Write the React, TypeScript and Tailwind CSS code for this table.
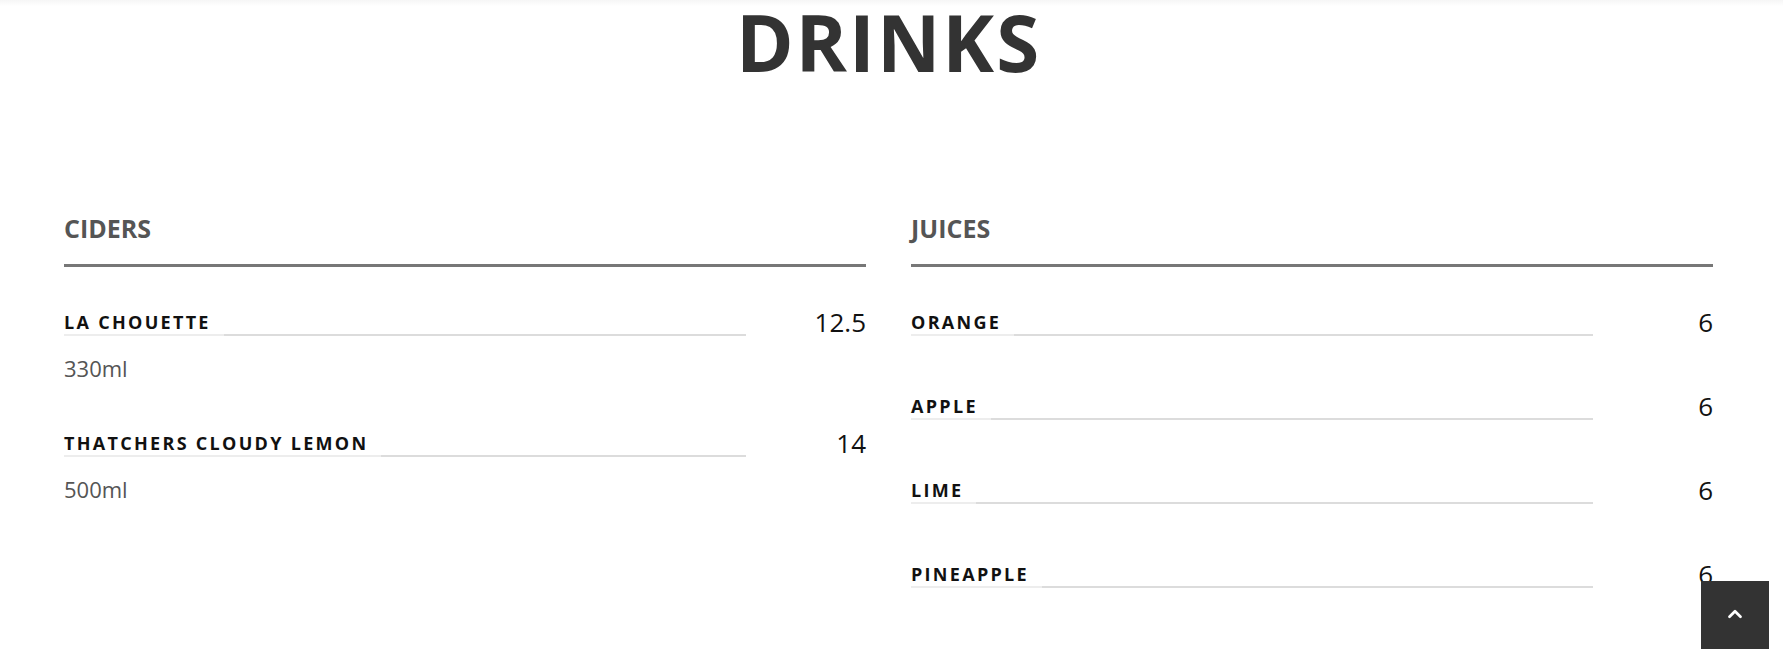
import { ChevronUp } from "lucide-react";

type Item = { name: string; price: string; note?: string };

const ciders: Item[] = [
  { name: "La Chouette", price: "12.5", note: "330ml" },
  { name: "Thatchers Cloudy Lemon", price: "14", note: "500ml" },
];

const juices: Item[] = [
  { name: "Orange", price: "6" },
  { name: "Apple", price: "6" },
  { name: "Lime", price: "6" },
  { name: "Pineapple", price: "6" },
];

function MenuItem({ item }: { item: Item }) {
  return (
    <div>
      <div className="flex items-start">
        <div className="flex-1 flex border-b-2 border-[#dcdcdc]">
          <span className="-mb-[2px] border-b-2 border-[#ededed] pr-[13px] text-[18px] leading-[24px] font-bold uppercase tracking-[2.3px] text-[#111]">
            {item.name}
          </span>
        </div>
        <div className="w-[120px] -mt-[3px] text-right text-[26px] leading-[31px] text-[#111]">
          {item.price}
        </div>
      </div>
      {item.note && (
        <p className="mt-[16px] text-[22px] leading-[28px] text-[#555]">{item.note}</p>
      )}
    </div>
  );
}

function Section({ title, items, gap }: { title: string; items: Item[]; gap: string }) {
  return (
    <section>
      <h2 className="text-[25px] leading-[25px] font-bold uppercase text-[#555]">{title}</h2>
      <div className="mt-[23px] h-[3px] bg-[#777]" />
      <div className={`mt-[43px] flex flex-col ${gap}`}>
        {items.map((item) => (
          <MenuItem key={item.name} item={item} />
        ))}
      </div>
    </section>
  );
}

export default function App() {
  return (
    <div className="relative min-h-[667px] bg-white font-['Open_Sans',sans-serif]">
      {/* faint header shadow */}
      <div className="fixed top-0 left-0 right-0 h-[6px] bg-gradient-to-b from-[#f6f6f6] to-white" />

      <div className="pl-[64px] pr-[70px]">
        <h1 className="text-center text-[78px] leading-[84px] font-bold tracking-[2px] text-[#333]">
          DRINKS
        </h1>

        <div className="mt-[132px] grid grid-cols-2 gap-x-[45px]">
          <Section title="Ciders" items={ciders} gap="gap-[49px]" />
          <Section title="Juices" items={juices} gap="gap-[56px]" />
        </div>
      </div>

      {/* back to top */}
      <button className="fixed bottom-[18px] right-[14px] flex h-[68px] w-[68px] items-center justify-center bg-[#333]">
        <ChevronUp className="-mt-[2px] h-[22px] w-[22px] text-white" strokeWidth={3} />
      </button>
    </div>
  );
}
